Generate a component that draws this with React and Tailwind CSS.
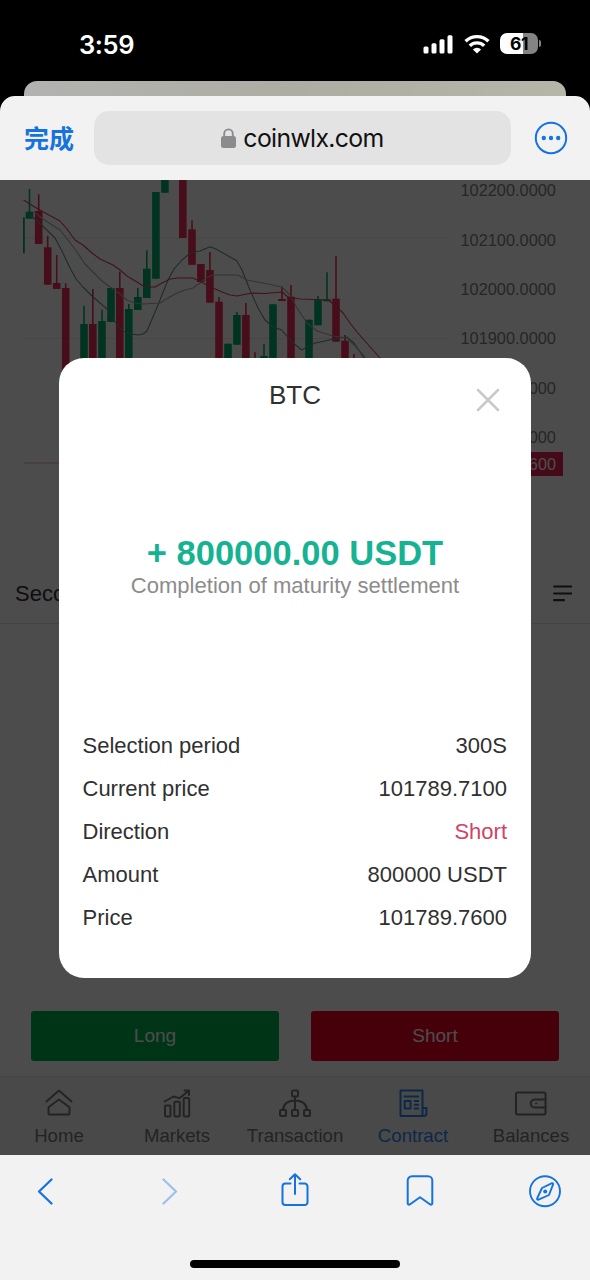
import { useState } from "react"

// x = candle centre, top/bottom = body, wick = top of the thin line
const candles = [
  { x: 29.5, top: 211.7, bottom: 218.7, wick: 189, up: true },
  { x: 38.7, top: 211, bottom: 244, wick: 194.3, up: false },
  { x: 47.7, top: 247.3, bottom: 284.7, wick: 235.7, up: false },
  { x: 56.7, top: 283, bottom: 289, wick: 255, up: false },
  { x: 65.7, top: 288, bottom: 380, wick: 283.3, up: false },
  { x: 84, top: 324, bottom: 380, wick: 305.7, up: true },
  { x: 92.8, top: 324, bottom: 380, wick: 289, up: false },
  { x: 102, top: 321, bottom: 380, wick: 309.7, up: true },
  { x: 111, top: 288, bottom: 322, wick: 288, up: true },
  { x: 119.8, top: 288, bottom: 380, wick: 271.7, up: false },
  { x: 128.8, top: 309, bottom: 380, wick: 304, up: true },
  { x: 137.8, top: 297, bottom: 310, wick: 288, up: true },
  { x: 146.8, top: 268.7, bottom: 298, wick: 250.3, up: true },
  { x: 155.9, top: 192, bottom: 278.7, wick: 192, up: true },
  { x: 164.9, top: 170, bottom: 192.8, wick: 170, up: true },
  { x: 182.8, top: 170, bottom: 238, wick: 170, up: false },
  { x: 192, top: 229.3, bottom: 264.8, wick: 220.3, up: false },
  { x: 200.9, top: 264, bottom: 282, wick: 264, up: false },
  { x: 209.9, top: 270, bottom: 302.7, wick: 252, up: false },
  { x: 219, top: 301.7, bottom: 380, wick: 297, up: false },
  { x: 228, top: 343.7, bottom: 380, wick: 343.7, up: true },
  { x: 236.9, top: 315, bottom: 344.8, wick: 312, up: true },
  { x: 245.9, top: 315, bottom: 380, wick: 303, up: false },
  { x: 255, top: 362, bottom: 380, wick: 352.3, up: false },
  { x: 264, top: 356, bottom: 380, wick: 344, up: true },
  { x: 273, top: 304.3, bottom: 380, wick: 304.3, up: true },
  { x: 282, top: 299, bottom: 301, wick: 286.7, up: false },
  { x: 291, top: 296.7, bottom: 380, wick: 285, up: false },
  { x: 309, top: 319.7, bottom: 380, wick: 319.7, up: true },
  { x: 318, top: 300, bottom: 325.3, wick: 296, up: true },
  { x: 327, top: 299.3, bottom: 301.2, wick: 272.3, up: true },
  { x: 336, top: 298.7, bottom: 341.7, wick: 256, up: false },
  { x: 345, top: 340.7, bottom: 380, wick: 335, up: false },
  { x: 354, top: 362, bottom: 380, wick: 354, up: false },
]

const averages = [
  {
    color: "#5f9485",
    points:
      "29,214 41.7,225 55,238 62,251 70,268 76,279 83,287 92,296 100,303 107,309 115,322 123,331 131,334 138,335 143,334 147,331 158,305 168,280 174,269 182,260 188,255 193,252 200,251 210,246.7 216,249 236.7,260.7 242,270 250,290 258,308 265,320 273,327 281.7,330 292,342 301.7,350 309,346 315,343 325,341 333,339 346.7,337 354,343 364,358",
  },
  {
    color: "#b0a8a8",
    points:
      "34,212 43,219 52,225 60,230 68,240 77,252 85,264 93,272 102,281 110,287 119,293 127,300 135,303 143,304 160,303 168,298 177,293 185,290 193,288 200,283 206,278 213,275 238,275 247,280 263,283 282,287 290,295 297,308 307,323 317,331 333,336 347,338 354,345 366,358",
  },
  {
    color: "#d83c62",
    points:
      "23.5,200 38,209 60,221 67,229 75,240 83,245 92,253 100,259 113,265 120,270 127,276 143,285.7 148,287 155,287 162,283 170,279 178,278 193,278 203,283 213,288 222,292 230,295 237,296 252,293 265,293.5 282,292 288,297 300,299 328,300 336,306 343,313 350,323 357,332 380,358",
  },
]

const axisPrices = [
  "102200.0000",
  "102100.0000",
  "102000.0000",
  "101900.0000",
  "101800.0000",
  "101700.0000",
]

const details = [
  { label: "Selection period", value: "300S" },
  { label: "Current price", value: "101789.7100" },
  { label: "Direction", value: "Short", accent: true },
  { label: "Amount", value: "800000 USDT" },
  { label: "Price", value: "101789.7600" },
]

const tabs = [
  { name: "Home", Icon: HomeIcon },
  { name: "Markets", Icon: MarketsIcon },
  { name: "Transaction", Icon: TransactionIcon },
  { name: "Contract", Icon: ContractIcon },
  { name: "Balances", Icon: BalancesIcon },
]

function TabSvg({ children }) {
  return (
    <svg width="34" height="30" viewBox="0 0 34 30" fill="none" stroke="currentColor" strokeWidth="2" strokeLinejoin="round" strokeLinecap="round">
      {children}
    </svg>
  )
}

function HomeIcon() {
  return (
    <TabSvg>
      <path d="M4.500 13.500 17 2.500l12.500 11" />
      <path d="M6.500 19.200 17 11.500l10.500 7.700V25a1.600 1.600 0 0 1-1.600 1.600H8.100A1.600 1.600 0 0 1 6.500 25Z" />
    </TabSvg>
  )
}

function MarketsIcon() {
  return (
    <TabSvg>
      <rect x="5" y="17.500" width="5.500" height="11" rx="1" />
      <rect x="14.300" y="13.800" width="5.500" height="14.700" rx="1" />
      <rect x="23.700" y="10" width="5.500" height="18.500" rx="1" />
      <path d="M4.500 13.500 13.500 8.500l6 1.600L28.500 3M24.500 2.500h4.500V7" />
    </TabSvg>
  )
}

function TransactionIcon() {
  return (
    <TabSvg>
      <rect x="14" y="2.500" width="6" height="6" rx="1" />
      <rect x="2" y="22" width="6" height="6" rx="1" />
      <rect x="14" y="22" width="6" height="6" rx="1" />
      <rect x="26" y="22" width="6" height="6" rx="1" />
      <path d="M17 8.500V22M5 22c.4-5.500 4.500-9.200 12-9.500 7.500.3 11.600 4 12 9.500" />
    </TabSvg>
  )
}

function ContractIcon() {
  return (
    <TabSvg>
      <path d="M26.500 20V2.500H4.500v25.500H28a2.400 2.400 0 0 0 2.400-2.400V20h-3.900v6c0 1.200.3 1.900 1 2" />
      <path d="M8.500 8.500h13.700M18.600 13h3.600M18.600 16.800h3.600M18.600 20.600h3.600" />
      <rect x="8.700" y="13" width="5.800" height="7.600" />
    </TabSvg>
  )
}

function BalancesIcon() {
  return (
    <TabSvg>
      <rect x="2" y="4.500" width="29.500" height="22" rx="1.500" />
      <path d="M31.500 11.500H20.700a4 4 0 0 0 0 8h10.800" />
      <circle cx="22.200" cy="15.500" r=".6" fill="currentColor" strokeWidth="1" />
    </TabSvg>
  )
}

function StatusBar() {
  return (
    <div className="flex h-[81px] items-start justify-between pt-[30px] pr-[49px] pl-[79px] text-white">
      <span className="font-['Inter',sans-serif] text-[25.500px] leading-[29px] font-semibold tracking-[-0.400px]">3:59</span>
      <div className="flex items-center gap-[10px] pt-[3px]">
        <svg width="31" height="20" viewBox="0 0 31 20" fill="currentColor">
          <rect x=".5" y="12.600" width="5" height="7" rx="1.500" />
          <rect x="8.500" y="9.200" width="5" height="10.400" rx="1.500" />
          <rect x="16.500" y="5.200" width="5" height="14.400" rx="1.500" />
          <rect x="24.500" y="1.200" width="5" height="18.400" rx="1.500" />
        </svg>
        <svg width="26" height="20" viewBox="0 0 26 20" fill="none" stroke="currentColor" strokeWidth="3.400">
          <path d="M1.600 7.300a16.300 16.300 0 0 1 22.800 0" />
          <path d="M5.800 11.800a10.300 10.300 0 0 1 14.400 0" />
          <path d="m13 19.600-4.100-4.200a6 6 0 0 1 8.200 0Z" fill="currentColor" stroke="none" />
        </svg>
        <div className="flex items-center gap-px">
          <div className="flex h-[21px] w-[38px] items-center justify-center rounded-[7px] bg-linear-to-r from-white from-61% to-[#848484] to-61%">
            <span className="font-['Inter',sans-serif] text-[17.500px] leading-none font-bold tracking-[-0.500px] text-black">61</span>
          </div>
          <div className="h-[7px] w-[2px] rounded-r-full bg-[#848484]" />
        </div>
      </div>
    </div>
  )
}

function AddressBar() {
  return (
    <div className="flex h-[84px] items-center rounded-t-[15px] bg-[#f2f2f2] pr-[22px] pl-[24px]">
      <button className="w-[70px] pb-[2px] text-left font-['Noto_Sans_CJK_SC',sans-serif] text-[25px] leading-none font-bold text-[#1573e0]">
        完成
      </button>
      <div className="flex h-[54px] w-[417px] items-center justify-center gap-[7px] rounded-[15px] bg-[#e3e3e3]">
        <svg width="15" height="20" viewBox="0 0 15 20">
          <rect y="8" width="15" height="12" rx="2.500" fill="#8b8b8e" />
          <path d="M3.200 9V5.700a4.300 4.300 0 0 1 8.600 0V9" fill="none" stroke="#8b8b8e" strokeWidth="1.900" />
        </svg>
        <span className="pt-[2px] font-['Inter',sans-serif] text-[24.800px] tracking-[-0.650px] text-[#111]">coinwlx.com</span>
      </div>
      <svg className="ml-auto" width="34" height="34" viewBox="0 0 34 34" fill="#1573e0">
        <circle cx="17" cy="17" r="15.200" fill="none" stroke="#1573e0" strokeWidth="2" />
        <circle cx="9.800" cy="17" r="2.200" />
        <circle cx="17" cy="17" r="2.200" />
        <circle cx="24.200" cy="17" r="2.200" />
      </svg>
    </div>
  )
}

function PriceChart() {
  return (
    <div className="relative flex h-[384px]">
      <svg width="448" height="384" viewBox="0 180 448 384" className="shrink-0">
        <path d="M24 238H448M24 338.500H448" stroke="#ececec" strokeWidth="1.200" />
        <path d="M24 463H448" stroke="#e8a4b0" strokeWidth="1.200" />
        <rect x="23" y="217.300" width="1.800" height="36" fill="#00a866" />
        {candles.map((c) => (
          <g key={c.x} fill={c.up ? "#00b070" : "#f02d58"}>
            <rect x={c.x - 3.800} y={c.top} width="7.600" height={c.bottom - c.top} />
            <rect x={c.x - 0.800} y={c.wick} width="1.600" height={c.bottom - c.wick} />
          </g>
        ))}
        {averages.map((line) => (
          <polyline key={line.color} points={line.points} fill="none" stroke={line.color} strokeWidth="1.100" strokeLinejoin="round" />
        ))}
      </svg>
      <div className="-mt-[14px] flex flex-col pl-[12.500px] text-[16.350px] text-[#808080]">
        {axisPrices.map((price) => (
          <span key={price} className="flex h-[49.300px] items-center">{price}</span>
        ))}
      </div>
      {/* Last price tag */}
      <span className="absolute top-[272px] right-[27px] flex h-[24px] items-center bg-[#e32450] px-[7px] text-[16.300px] text-white">
        101789.7600
      </span>
    </div>
  )
}

function TradePage() {
  const [active, setActive] = useState("Contract")

  return (
    <div className="flex h-full flex-col bg-white">
      <PriceChart />

      <div className="flex h-[60px] items-center justify-between border-b border-[#e4e4e4] pr-[18.500px] pl-[15px]">
        <span className="text-[22px] text-[#333]">Second</span>
        <svg width="19" height="18" viewBox="0 0 19 18" stroke="#333" strokeWidth="2.200">
          <path d="M.300 1.500H19M.300 8.500H19M.300 15.200h11.500" />
        </svg>
      </div>

      {/* Order buttons */}
      <div className="mt-auto flex justify-between px-[31px] pb-[15px] text-[19px] text-white">
        <button className="h-[50px] w-[248px] rounded-[3px] bg-[#00ad4c]">Long</button>
        <button className="h-[50px] w-[248px] rounded-[3px] bg-[#e60020]">Short</button>
      </div>

      <div className="grid h-[79px] grid-cols-5 border-t border-[#e9e9e9] bg-[#f6f6f6] pt-[11px]">
        {tabs.map(({ name, Icon }) => (
          <button
            key={name}
            onClick={() => setActive(name)}
            className={`flex flex-col items-center gap-[7px] ${active === name ? "text-[#2b87f5]" : "text-[#777]"}`}
          >
            <Icon />
            <span className="text-[18.600px] leading-[22px]">{name}</span>
          </button>
        ))}
      </div>
    </div>
  )
}

function ResultDialog({ onClose }) {
  return (
    <div className="absolute inset-0 flex items-center justify-center bg-black/70">
      <div className="relative flex h-[620px] w-[472px] flex-col rounded-[25px] bg-white pt-[22px] text-[#303030]">
        <h2 className="text-center text-[26px] leading-[30px]">BTC</h2>
        <button onClick={onClose} className="absolute top-[30px] right-[31px]">
          <svg width="24" height="24" viewBox="0 0 24 24" stroke="#c9c9c9" strokeWidth="2.500" strokeLinecap="round">
            <path d="m2 2 20 20M22 2 2 22" />
          </svg>
        </button>

        <div className="mt-[124px] text-center">
          <p className="text-[34.500px] leading-[38px] font-bold text-[#15b392]">+ 800000.00 USDT</p>
          <p className="text-[22.050px] leading-[27px] text-[#8c8c8c]">Completion of maturity settlement</p>
        </div>

        <div className="mt-[126px] pr-[24px] pl-[23.500px] text-[22px]">
          {details.map((row) => (
            <div key={row.label} className="flex h-[42.800px] items-center justify-between">
              <span>{row.label}</span>
              <span className={row.accent ? "text-[#cf4468]" : ""}>{row.value}</span>
            </div>
          ))}
        </div>
      </div>
    </div>
  )
}

function BrowserToolbar() {
  return (
    <div className="flex h-[125px] flex-col justify-between bg-[#f2f2f2] pt-[18px] pb-[12px]">
      <div className="flex justify-between px-[28px] text-[#1573e0]">
        <svg width="34" height="36" viewBox="0 0 34 36" fill="none" stroke="currentColor" strokeWidth="2.300" strokeLinecap="round" strokeLinejoin="round">
          <path d="M23.500 6.500 11 18.500l12.500 12" />
        </svg>
        <svg width="34" height="36" viewBox="0 0 34 36" fill="none" stroke="#9cc1ee" strokeWidth="2.300" strokeLinecap="round" strokeLinejoin="round">
          <path d="M10.500 6.500 23 18.500l-12.500 12" />
        </svg>
        <svg width="34" height="36" viewBox="0 0 34 36" fill="none" stroke="currentColor" strokeWidth="2" strokeLinecap="round" strokeLinejoin="round">
          <path d="M12.500 10.600H7.300a2.800 2.800 0 0 0-2.800 2.800v15.800A2.800 2.800 0 0 0 7.300 32h19.400a2.800 2.800 0 0 0 2.800-2.800V13.400a2.800 2.800 0 0 0-2.800-2.800h-5.200" />
          <path d="M17 21V1.500M11.800 6.300 17 1.200l5.200 5.100" />
        </svg>
        <svg width="34" height="36" viewBox="0 0 34 36" fill="none" stroke="currentColor" strokeWidth="2" strokeLinecap="round" strokeLinejoin="round">
          <path d="M4.700 7.500a4.200 4.200 0 0 1 4.200-4.200h16.200a4.200 4.200 0 0 1 4.200 4.200v22.700c0 1.400-1.400 1.800-2.400 1L17 24.200l-9.900 7c-1 .8-2.400.4-2.400-1Z" />
        </svg>
        <svg width="34" height="36" viewBox="0 0 34 36" fill="none" stroke="currentColor" strokeWidth="1.900" strokeLinejoin="round">
          <circle cx="17" cy="18.300" r="15" />
          <path d="m14 15 10-4.800c.8-.3 1.400.3 1.100 1.100L21 22l-10.500 4.600c-.8.300-1.700-.3-1.400-1.100Z" />
          <circle cx="17.200" cy="18.400" r="2" fill="currentColor" stroke="none" />
        </svg>
      </div>
      <div className="mx-auto h-[8px] w-[210px] rounded-full bg-black" />
    </div>
  )
}

export default function App() {
  const [open, setOpen] = useState(true)

  return (
    <div className="flex h-[1280px] w-[590px] flex-col overflow-hidden bg-black font-['Liberation_Sans',Arial,sans-serif]">
      <StatusBar />
      {/* Edge of the sheet behind the browser */}
      <div className="mx-[24px] h-[15px] rounded-t-[13px] bg-linear-to-r from-[#b2b3b1] via-[#adada3] to-[#b5b6a8]" />
      <AddressBar />
      <div className="relative h-[975px] overflow-hidden">
        <TradePage />
        {open && <ResultDialog onClose={() => setOpen(false)} />}
      </div>
      <BrowserToolbar />
    </div>
  )
}
